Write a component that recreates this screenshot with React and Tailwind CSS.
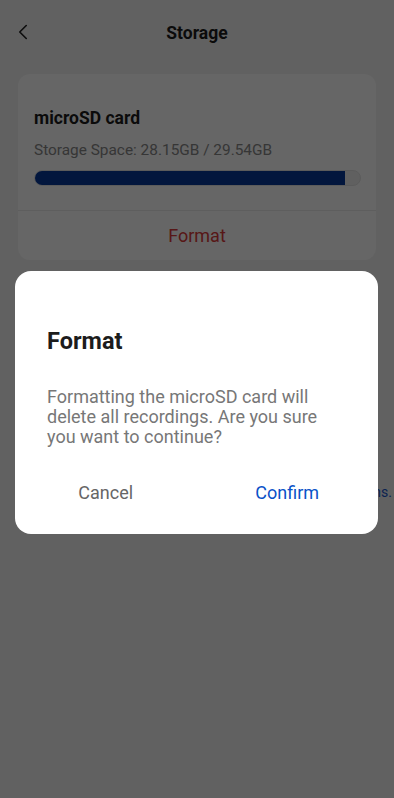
import { ChevronLeft } from 'lucide-react'

export default function App() {
  return (
    <div className="relative w-[394px] h-[798px] bg-[#f3f3f3] overflow-hidden" style={{ fontFamily: 'Roboto, "Noto Sans", sans-serif' }}>
      {/* header */}
      <div className="relative h-[66px] flex items-center justify-center">
        <ChevronLeft size={26} strokeWidth={1.5} className="absolute left-[10px] top-[19px] text-[#222]" />
        <span className="text-[17.5px] font-bold text-[#1c1c1c]">Storage</span>
      </div>

      {/* card */}
      <div className="mx-[18px] mt-[8px] bg-white rounded-[12px]">
        <div className="px-[16px] pt-[32px] pb-[24px]">
          <p className="text-[17.5px] font-bold text-[#1c1c1c] leading-[24px]">microSD card</p>
          <p className="mt-[10px] text-[15.4px] text-[#888] leading-[21px]">Storage Space: 28.15GB / 29.54GB</p>
          <div className="mt-[9px] h-[16px] w-[327px] rounded-full bg-[#f0f0f0] border border-[#e4e4e4] overflow-hidden">
            <div className="-m-px h-[16px] w-[311px] rounded-l-full bg-[#06379a]" />
          </div>
        </div>
        <div className="border-t border-[#ececec] h-[50px] flex items-center justify-center">
          <span className="text-[18px] text-[#d93b3b]">Format</span>
        </div>
      </div>

      <div className="mt-[222px] pr-[2px] text-right text-[14px] text-[#1a56c9]">
        Learn more about storage instructions.
      </div>

      {/* overlay */}
      <div className="absolute inset-0 bg-black/60" />

      {/* dialog */}
      <div className="absolute left-[15px] top-[271px] w-[363px] h-[263px] bg-white rounded-[16px] px-[32px] pt-[55px]">
        <p className="text-[23.5px] font-bold text-[#1c1c1c] leading-[30px]">Format</p>
        <p className="mt-[31px] text-[18px] text-[#777] leading-[20px]">
          Formatting the microSD card will delete all recordings. Are you sure you want to continue?
        </p>
        <div className="-mx-[32px] mt-[32px] flex">
          <div className="flex-1 text-center text-[18px] text-[#666]">Cancel</div>
          <div className="flex-1 text-center text-[18px] text-[#0a52c8]">Confirm</div>
        </div>
      </div>
    </div>
  )
}
